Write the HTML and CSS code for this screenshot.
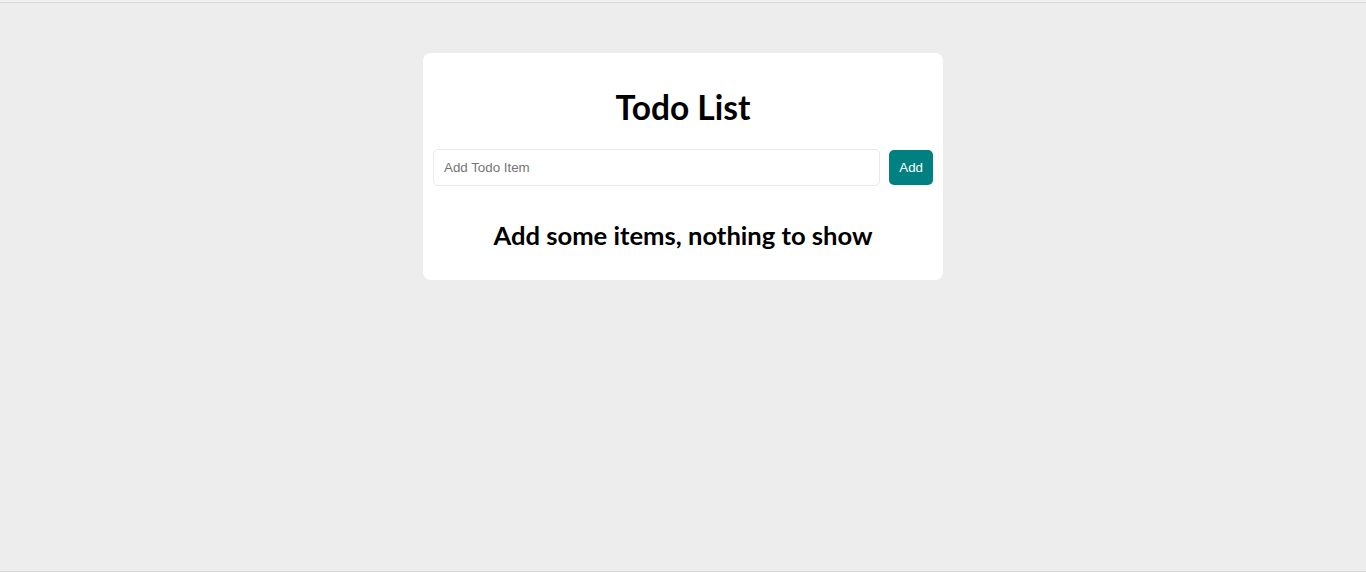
FILE: index.html
```html
<!DOCTYPE html>
<html lang="en">
<head>
<meta charset="utf-8">
<title>Todo List</title>
<link rel="stylesheet" href="styles.css">
</head>
<body>
<div class="frame">
  <main class="card">
    <h1 class="title">Todo List</h1>
    <form class="add-row">
      <input class="todo-input" type="text" placeholder="Add Todo Item">
      <button class="add-btn" type="button">Add</button>
    </form>
    <h2 class="empty">Add some items, nothing to show</h2>
  </main>
</div>
</body>
</html>
```

FILE: styles.css
```css
html {
  background: #f0f0f0;
}
body {
  margin: 0;
  font-family: Lato, "Open Sans", sans-serif;
}
.frame {
  margin-top: 2px;
  height: 570px;
  box-sizing: border-box;
  border-top: 1px solid #d9d9d9;
  border-bottom: 1px solid #d9d9d9;
  background: #ededed;
  padding-top: 50px;
}
.card {
  width: 520px;
  box-sizing: border-box;
  margin: 0 auto;
  background: #ffffff;
  border-radius: 8px;
  padding: 10px;
}
.title {
  margin: 23px 0 20px;
  font-size: 33.5px;
  line-height: 43px;
  font-weight: 700;
  text-align: center;
  color: #000;
}
.add-row {
  display: flex;
  align-items: center;
  gap: 9px;
  margin: 0;
}
.todo-input {
  flex: 1;
  height: 37px;
  box-sizing: border-box;
  border: 1px solid #e9e9e9;
  border-radius: 5px;
  padding: 0 10px;
  font-family: "Liberation Sans", Arial, sans-serif;
  font-size: 13.33px;
  color: #333;
  outline: none;
}
.todo-input::placeholder {
  color: #757575;
}
.add-btn {
  height: 35px;
  padding: 0 10px;
  border: none;
  border-radius: 5px;
  background: #008080;
  color: #ffffff;
  font-family: "Liberation Sans", Arial, sans-serif;
  font-size: 13.33px;
}
.empty {
  margin: 33px 0 19px;
  font-size: 25.6px;
  line-height: 32px;
  font-weight: 700;
  text-align: center;
  color: #000;
}
```
